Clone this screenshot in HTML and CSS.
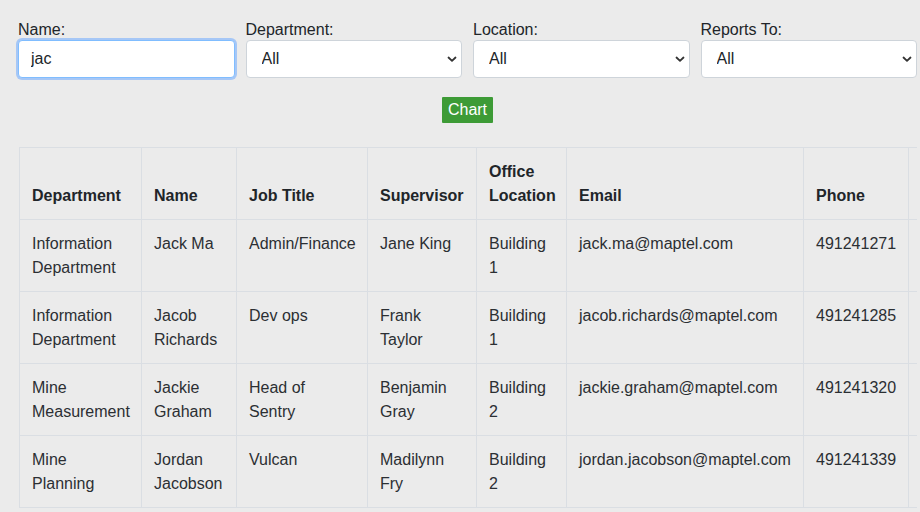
FILE: index.html
```html
<!DOCTYPE html>
<html lang="en">
<head>
<meta charset="utf-8">
<title>Employee Directory</title>
<link rel="stylesheet" href="styles.css">
</head>
<body>
<div class="page">
  <div class="filters">
    <div class="field">
      <label for="f-name">Name:</label>
      <input id="f-name" class="control control-focus" type="text" value="jac">
    </div>
    <div class="field">
      <label for="f-dept">Department:</label>
      <select id="f-dept" class="control select"><option>All</option></select>
    </div>
    <div class="field">
      <label for="f-loc">Location:</label>
      <select id="f-loc" class="control select"><option>All</option></select>
    </div>
    <div class="field">
      <label for="f-rep">Reports To:</label>
      <select id="f-rep" class="control select"><option>All</option></select>
    </div>
  </div>
  <div class="actions">
    <button class="btn-chart" type="button">Chart</button>
  </div>
  <div class="table-wrap">
    <table class="grid">
      <colgroup>
        <col class="c-dept"><col class="c-name"><col class="c-job"><col class="c-sup"><col class="c-loc"><col class="c-email"><col class="c-phone"><col class="c-extra">
      </colgroup>
      <thead>
        <tr>
          <th>Department</th><th>Name</th><th>Job Title</th><th>Supervisor</th><th>Office Location</th><th>Email</th><th>Phone</th><th></th>
        </tr>
      </thead>
      <tbody>
        <tr><td>Information Department</td><td>Jack Ma</td><td>Admin/Finance</td><td>Jane King</td><td>Building 1</td><td>jack.ma@maptel.com</td><td>491241271</td><td></td></tr>
        <tr><td>Information Department</td><td>Jacob Richards</td><td>Dev ops</td><td>Frank Taylor</td><td>Building 1</td><td>jacob.richards@maptel.com</td><td>491241285</td><td></td></tr>
        <tr><td>Mine Measurement</td><td>Jackie Graham</td><td>Head of<br>Sentry</td><td>Benjamin Gray</td><td>Building 2</td><td>jackie.graham@maptel.com</td><td>491241320</td><td></td></tr>
        <tr><td>Mine Planning</td><td>Jordan Jacobson</td><td>Vulcan</td><td>Madilynn Fry</td><td>Building 2</td><td>jordan.jacobson@maptel.com</td><td>491241339</td><td></td></tr>
      </tbody>
    </table>
  </div>
</div>
</body>
</html>
```
FILE: styles.css
```css
html, body {
  margin: 0;
  padding: 0;
  background: #ebebeb;
}

body {
  font-family: "Liberation Sans", Arial, sans-serif;
  font-size: 16px;
  line-height: 24px;
  color: #212529;
}

.page {
  padding: 16px 3px 0 18px;
}

.filters {
  display: grid;
  grid-template-columns: repeat(4, 1fr);
  column-gap: 11px;
}

.field label {
  display: block;
  padding-top: 4px;
  line-height: 20px;
}

.control {
  display: block;
  box-sizing: border-box;
  width: 100%;
  height: 38px;
  margin: 0;
  padding: 6px 12px;
  font-family: inherit;
  font-size: 16px;
  line-height: 24px;
  color: #212529;
  background-color: #fff;
  border: 1px solid #ced4da;
  border-radius: 4px;
  outline: none;
}

.control-focus {
  border-color: #80bdff;
  box-shadow: 0 0 0 2px rgba(110, 170, 255, 0.55);
}

.select {
  -webkit-appearance: none;
  appearance: none;
  padding-left: 15px;
  background-image: url("data:image/svg+xml,%3Csvg xmlns='http://www.w3.org/2000/svg' width='10' height='7' viewBox='0 0 10 7'%3E%3Cpath d='M1.5 1.5 L5 4.8 L8.5 1.5' fill='none' stroke='%23333' stroke-width='1.8' stroke-linecap='round' stroke-linejoin='round'/%3E%3C/svg%3E");
  background-repeat: no-repeat;
  background-position: right 4px center;
  background-size: 10px 7px;
}

.actions {
  display: flex;
  justify-content: center;
  margin-top: 19px;
}

.btn-chart {
  height: 26px;
  padding: 0 6px;
  font-family: inherit;
  font-size: 16px;
  line-height: 26px;
  color: #fff;
  background: #3d9b36;
  border: none;
  border-radius: 1px;
}

.table-wrap {
  margin-top: 24px;
  padding-left: 1px;
  overflow: hidden;
}

.grid {
  border-collapse: collapse;
  table-layout: fixed;
  width: 1010px;
}

.c-dept { width: 122px; }
.c-name { width: 95px; }
.c-job { width: 131px; }
.c-sup { width: 109px; }
.c-loc { width: 90px; }
.c-email { width: 237px; }
.c-phone { width: 105px; }
.c-extra { width: 121px; }

.grid th,
.grid td {
  padding: 12px 10px 11px 12px;
  border: 1px solid #dadee3;
  text-align: left;
  vertical-align: top;
  line-height: 24px;
}

.grid th {
  font-weight: bold;
  vertical-align: bottom;
  color: #212529;
}

.grid td {
  color: #2b2f33;
}
```
